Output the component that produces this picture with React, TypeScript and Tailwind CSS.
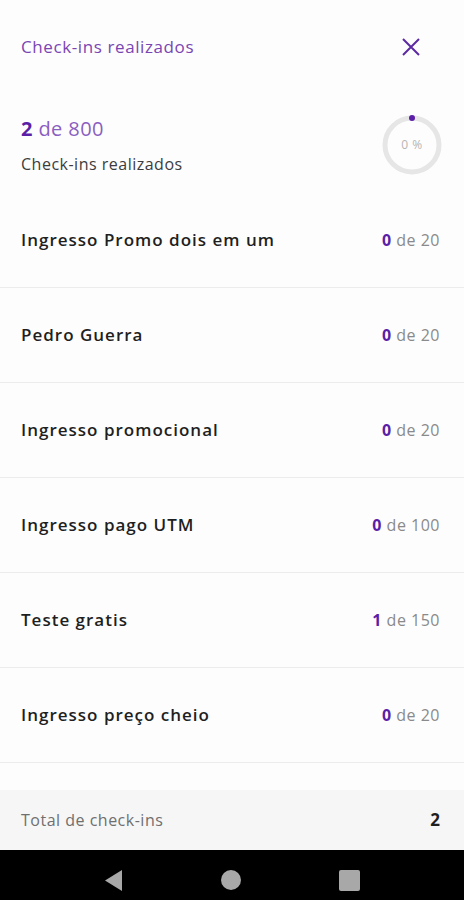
import React from "react";

const rows = [
  { name: "Ingresso Promo dois em um", done: 0, total: 20 },
  { name: "Pedro Guerra", done: 0, total: 20 },
  { name: "Ingresso promocional", done: 0, total: 20 },
  { name: "Ingresso pago UTM", done: 0, total: 100 },
  { name: "Teste gratis", done: 1, total: 150 },
  { name: "Ingresso preço cheio", done: 0, total: 20 },
];

function Ring() {
  return (
    <div className="relative w-[62px] h-[62px]">
      <svg width="62" height="62" viewBox="0 0 62 62" className="absolute inset-0">
        <circle cx="31" cy="31" r="27" fill="none" stroke="#e6e6e6" strokeWidth="5" />
        <circle cx="31" cy="4" r="3" fill="#5b1ea6" />
      </svg>
      <div className="absolute inset-0 flex items-center justify-center text-[12px] tracking-[0.5px] text-[#b5b5b5]">0 %</div>
    </div>
  );
}

export default function App() {
  return (
    <div className="w-[464px] h-[900px] bg-[#fdfdfd] flex flex-col font-['Open_Sans',sans-serif]">
      <div className="h-[94px] flex items-center justify-between pl-[21px] pr-[44px]">
        <span className="text-[17px] tracking-[0.6px] text-[#7a45b3]">Check-ins realizados</span>
        <svg width="18" height="18" viewBox="0 0 18 18" fill="none" stroke="#5b2aa3" strokeWidth="2">
          <path d="M1 1L17 17M17 1L1 17" />
        </svg>
      </div>
      <div className="h-[99px] flex justify-between pl-[21px] pr-[21px]">
        <div className="flex flex-col pt-[20px]">
          <div className="text-[20px] leading-[30px] tracking-[0.4px] text-[#8a5fc0]">
            <span className="font-bold text-[#5b1ea6]">2</span> de 800
          </div>
          <div className="text-[16px] leading-[20px] mt-[10px] tracking-[0.5px] text-[#3c3c3c]">Check-ins realizados</div>
        </div>
        <div className="pt-[20px]">
          <Ring />
        </div>
      </div>
      <div className="flex flex-col">
        {rows.map((r) => (
          <div
            key={r.name}
            className="h-[95px] flex items-center justify-between pl-[21px] pr-[24px] border-b border-[#ececec]"
          >
            <span className="text-[17px] font-semibold tracking-[1px] text-[#1f1f1f]">{r.name}</span>
            <span className="text-[16px] tracking-[0.5px] text-[#8a8a8a]">
              <span className="font-bold text-[#5b1ea6]">{r.done}</span> de {r.total}
            </span>
          </div>
        ))}
      </div>
      <div className="flex-1" />
      <div className="h-[60px] bg-[#f6f6f6] flex items-center justify-between pl-[21px] pr-[24px]">
        <span className="text-[16px] tracking-[0.5px] text-[#6f6f6f]">Total de check-ins</span>
        <span className="text-[17px] font-bold text-[#1f1f1f]">2</span>
      </div>
      <div className="h-[50px] bg-black flex items-center justify-center pt-[10px]">
        <div className="w-[255px] flex items-center justify-between">
          <svg width="18" height="21" viewBox="0 0 18 21">
            <path d="M17 0V21L0 10.5Z" fill="#a8a8a8" />
          </svg>
          <div className="w-[20px] h-[20px] rounded-full bg-[#a8a8a8]" />
          <div className="w-[21px] h-[21px] rounded-[2px] bg-[#a8a8a8]" />
        </div>
      </div>
    </div>
  );
}
